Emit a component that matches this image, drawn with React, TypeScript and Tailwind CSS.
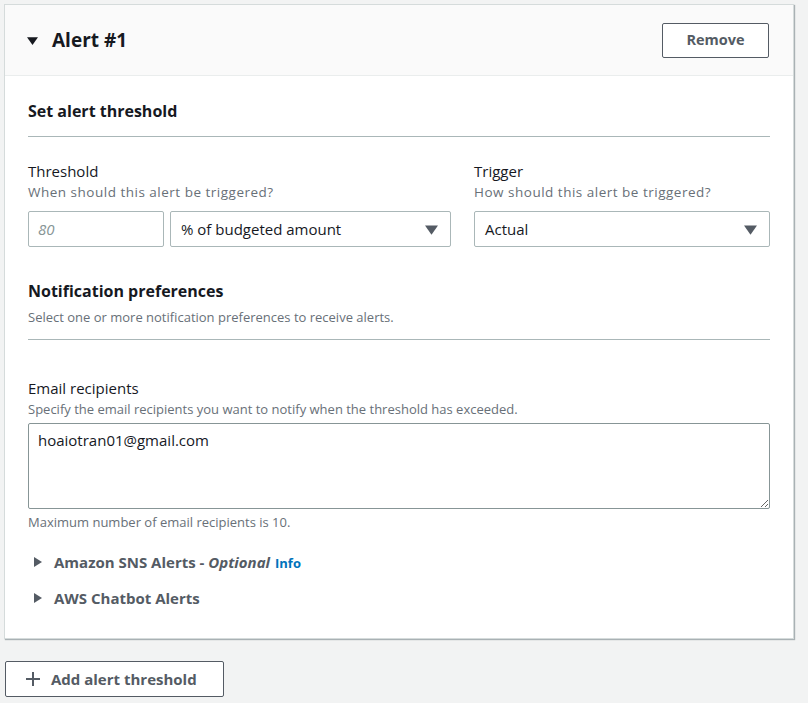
const Caret = ({ className }: { className?: string }) => (
  <svg viewBox="0 0 10 10" className={className} fill="currentColor">
    <path d="M0 2 L10 2 L5 9 Z" />
  </svg>
);

const SideCaret = () => (
  <svg viewBox="0 0 8 10" className="w-[8px] h-[10px] text-[#545b64]" fill="currentColor">
    <path d="M0 0 L8 5 L0 10 Z" />
  </svg>
);

const Select = ({ value, className }: { value: string; className?: string }) => (
  <div
    className={`h-[36px] border border-[#aab7b8] rounded-[2px] bg-white flex items-center justify-between pl-[10px] pr-[12px] text-[15px] text-[#16191f] ${className ?? ""}`}
  >
    <span>{value}</span>
    <Caret className="w-[13px] h-[13px] text-[#545b64]" />
  </div>
);

const Expandable = ({ children }: { children: React.ReactNode }) => (
  <div className="flex items-center gap-[12px] pl-[6px] h-[20px]">
    <SideCaret />
    <div className="text-[15px] font-bold text-[#545b64] flex items-baseline gap-[5px]">{children}</div>
  </div>
);

export default function App() {
  return (
    <div
      className="min-h-[703px] bg-[#f2f3f3] pt-[4px] pl-[4px] text-[#16191f]"
      style={{ fontFamily: "'Open Sans', Roboto, sans-serif" }}
    >
      <div className="w-[790px] bg-white border border-[#d5dbdb] shadow-[1px_1px_1px_rgba(0,28,36,0.3)]">
        {/* header */}
        <div className="h-[71px] bg-[#fafafa] border-b border-[#eaeded] flex items-center justify-between pl-[22px] pr-[24px]">
          <div className="flex items-center gap-[14px]">
            <Caret className="w-[11px] h-[11px] text-[#16191f]" />
            <span className="text-[19px] font-bold">Alert #1</span>
          </div>
          <button className="w-[107px] h-[35px] border border-[#545b64] rounded-[2px] bg-white text-[14.5px] font-bold text-[#545b64]">
            Remove
          </button>
        </div>

        {/* body */}
        <div className="px-[23px] pt-[24px] pb-[30px]">
          <div className="text-[16px] font-bold leading-[22px] pb-[14px] border-b border-[#aab7b8]">Set alert threshold</div>

          <div className="flex gap-[23px] mt-[24px]">
            <div className="w-[423px]">
              <div className="text-[15px] leading-[20px]">Threshold</div>
              <div className="text-[13.5px] tracking-[0.5px] leading-[18px] text-[#687078] mt-[2px]">When should this alert be triggered?</div>
              <div className="flex gap-[6px] mt-[10px]">
                <div className="w-[136px] h-[36px] border border-[#aab7b8] rounded-[2px] flex items-center pl-[9px] text-[15px] italic text-[#879596]">
                  80
                </div>
                <Select value="% of budgeted amount" className="flex-1" />
              </div>
            </div>
            <div className="flex-1">
              <div className="text-[15px] leading-[20px]">Trigger</div>
              <div className="text-[13.5px] tracking-[0.5px] leading-[18px] text-[#687078] mt-[2px]">How should this alert be triggered?</div>
              <Select value="Actual" className="mt-[10px]" />
            </div>
          </div>

          <div className="mt-[33px] text-[16px] font-bold leading-[22px]">Notification preferences</div>
          <div className="text-[13px] text-[#687078] leading-[18px] mt-[6px] pb-[13px] border-b border-[#aab7b8]">
            Select one or more notification preferences to receive alerts.
          </div>

          <div className="mt-[38px] text-[15px] leading-[20px]">Email recipients</div>
          <div className="text-[13px] leading-[18px] text-[#687078] mt-[2px]">
            Specify the email recipients you want to notify when the threshold has exceeded.
          </div>
          <textarea
            className="block w-full h-[86px] mt-[5px] border border-[#879596] rounded-[2px] px-[9px] py-[5px] text-[15px] text-[#16191f] resize-y outline-none"
            defaultValue="hoaiotran01@gmail.com"
            style={{ fontFamily: "inherit" }}
          />
          <div className="text-[13px] text-[#687078] leading-[18px] mt-[4px]">Maximum number of email recipients is 10.</div>

          <div className="mt-[21px] flex flex-col gap-[16px]">
            <Expandable>
              <span>
                Amazon SNS Alerts - <i className="font-bold">Optional</i>
              </span>
              <span className="text-[13px] text-[#0073bb]">Info</span>
            </Expandable>
            <Expandable>AWS Chatbot Alerts</Expandable>
          </div>
        </div>
      </div>

      <button className="mt-[22px] ml-[1px] w-[219px] h-[36px] border border-[#545b64] rounded-[2px] bg-white flex items-center pl-[19px] gap-[10px] text-[15px] font-bold text-[#545b64]">
        <svg viewBox="0 0 16 16" className="w-[16px] h-[16px]" stroke="currentColor" strokeWidth="2" fill="none">
          <path d="M8 1 V15 M1 8 H15" />
        </svg>
        Add alert threshold
      </button>
    </div>
  );
}
